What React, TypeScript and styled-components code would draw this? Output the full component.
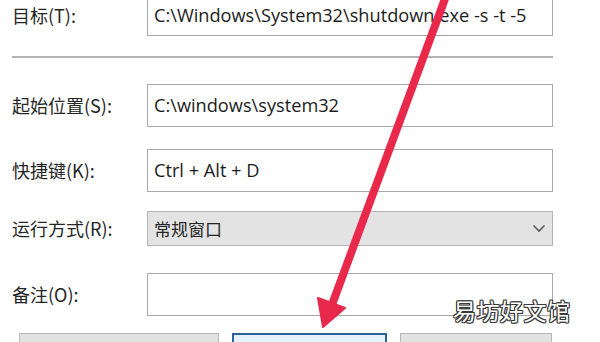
import * as React from "react";
import styled, { createGlobalStyle } from "styled-components";

const GlobalStyle = createGlobalStyle`
  html, body {
    margin: 0;
    padding: 0;
    background: #ffffff;
  }
  body {
    font-family: "Noto Sans", "Noto Sans CJK SC", sans-serif;
    overflow: hidden;
  }
`;

const Page = styled.div`
  position: relative;
  width: 600px;
  height: 342px;
  overflow: hidden;
  background: #ffffff;
`;

const Form = styled.div`
  display: flex;
  flex-direction: column;
  padding: 0 47px 0 12px;
  margin-top: -7px;
`;

const Row = styled.div<{ gap: number }>`
  display: grid;
  grid-template-columns: 135px 406px;
  align-items: center;
  margin-top: ${(p) => p.gap}px;
`;

const Label = styled.div`
  font-family: "Noto Sans CJK SC", "Noto Sans", sans-serif;
  font-size: 18px;
  color: #262626;
  white-space: nowrap;
`;

const TextBox = styled.div`
  box-sizing: border-box;
  height: 43px;
  border: 1.5px solid #a9a9a9;
  background: #ffffff;
  padding: 0 6px;
  display: flex;
  align-items: center;
  font-family: "Open Sans", "Noto Sans CJK SC", sans-serif;
  font-size: 18.2px;
  color: #1c1c1c;
  white-space: nowrap;
  overflow: hidden;
`;

const Combo = styled.div`
  box-sizing: border-box;
  height: 35px;
  border: 1.5px solid #b4b4b4;
  background: #e3e3e3;
  padding: 0 6px;
  display: flex;
  align-items: center;
  justify-content: space-between;
  font-family: "Noto Sans CJK SC", sans-serif;
  font-size: 17px;
  color: #262626;
`;

const Separator = styled.div`
  height: 1.5px;
  background: #b3b3b3;
  margin-top: 20px;
  width: 541px;
`;

const ButtonRow = styled.div`
  display: flex;
  gap: 13px;
  margin-top: 17px;
  padding-left: 7px;
`;

const Button = styled.div<{ w: number; primary?: boolean }>`
  box-sizing: border-box;
  width: ${(p) => p.w}px;
  height: 32px;
  background: ${(p) => (p.primary ? "#e5f1fb" : "#e1e1e1")};
  border: ${(p) => (p.primary ? "2px solid #2a6496" : "1.5px solid #b8b8b8")};
`;

const Watermark = styled.div`
  position: absolute;
  left: 453px;
  top: 293px;
  font-family: "Noto Sans CJK SC", sans-serif;
  font-size: 23px;
  letter-spacing: 0.5px;
  color: #ffffff;
  text-shadow: 1px 0 0 #3a3a3a, -1px 0 0 #3a3a3a, 0 1px 0 #3a3a3a,
    0 -1px 0 #3a3a3a, 1px 1px 0 #3a3a3a, -1px -1px 0 #3a3a3a,
    1px -1px 0 #3a3a3a, -1px 1px 0 #3a3a3a;
`;

const ArrowLayer = styled.svg`
  position: absolute;
  left: 0;
  top: 0;
  pointer-events: none;
`;

const Chevron = () => (
  <svg width="14" height="9" viewBox="0 0 14 9">
    <path d="M1.5 1.5 L7 7 L12.5 1.5" fill="none" stroke="#5a5a5a" strokeWidth="1.6" />
  </svg>
);

export default function App() {
  return (
    <Page>
      <GlobalStyle />
      <Form>
        <Row gap={0}>
          <Label>目标(T):</Label>
          <TextBox>C:\Windows\System32\shutdown.exe -s -t -5</TextBox>
        </Row>
        <Separator />
        <Row gap={26}>
          <Label>起始位置(S):</Label>
          <TextBox>C:\windows\system32</TextBox>
        </Row>
        <Row gap={22}>
          <Label>快捷键(K):</Label>
          <TextBox>Ctrl + Alt + D</TextBox>
        </Row>
        <Row gap={19}>
          <Label>运行方式(R):</Label>
          <Combo>
            <span>常规窗口</span>
            <Chevron />
          </Combo>
        </Row>
        <Row gap={27}>
          <Label>备注(O):</Label>
          <TextBox />
        </Row>
        <ButtonRow>
          <Button w={200} />
          <Button w={155} primary />
          <Button w={152} />
        </ButtonRow>
      </Form>
      <ArrowLayer width="600" height="342" viewBox="0 0 600 342">
        <line x1="446" y1="-4" x2="333" y2="302" stroke="#e8294b" strokeWidth="8" strokeLinecap="round" />
        <polygon points="323,327 318,298 345,308" fill="#e8294b" stroke="#e8294b" strokeWidth="2" strokeLinejoin="round" />
      </ArrowLayer>
      <Watermark>易坊好文馆</Watermark>
    </Page>
  );
}
